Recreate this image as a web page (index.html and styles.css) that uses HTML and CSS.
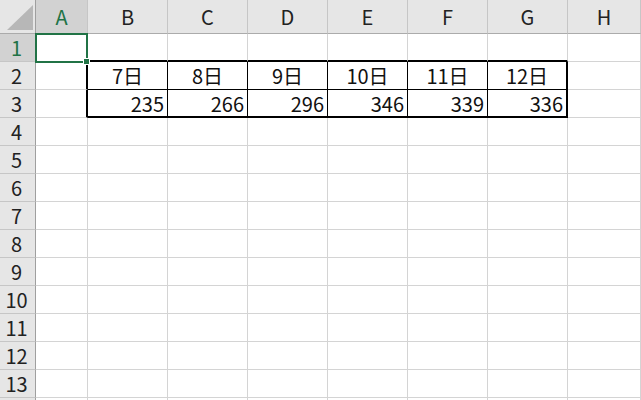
FILE: index.html
```html
<!DOCTYPE html>
<html lang="ja">
<head>
    <meta charset="UTF-8">
    <meta name="viewport" content="width=device-width, initial-scale=1.0">
    <title>Book1 - Excel</title>
    <link rel="stylesheet" href="styles.css">
</head>
<body>
    <div class="sheet">
        <!-- column headers -->
        <div class="corner">
            <svg width="35" height="33" viewBox="0 0 35 33"><polygon points="7,30 33,30 33,5" fill="#b7b7b7"/></svg>
        </div>
        <div class="col-head sel">A</div>
        <div class="col-head">B</div>
        <div class="col-head">C</div>
        <div class="col-head">D</div>
        <div class="col-head">E</div>
        <div class="col-head">F</div>
        <div class="col-head">G</div>
        <div class="col-head">H</div>

        <!-- row 1 -->
        <div class="row-head sel">1</div>
        <div class="cell active edge-r"><span class="cursor"><span class="handle"></span></span></div>
        <div class="cell above"></div>
        <div class="cell above"></div>
        <div class="cell above"></div>
        <div class="cell above"></div>
        <div class="cell above"></div>
        <div class="cell above"></div>
        <div class="cell"></div>

        <!-- row 2 -->
        <div class="row-head">2</div>
        <div class="cell edge-r"></div>
        <div class="cell tbl mid center">7日</div>
        <div class="cell tbl mid center">8日</div>
        <div class="cell tbl mid center">9日</div>
        <div class="cell tbl mid center">10日</div>
        <div class="cell tbl mid center">11日</div>
        <div class="cell tbl mid last center">12日</div>
        <div class="cell"></div>

        <!-- row 3 -->
        <div class="row-head">3</div>
        <div class="cell edge-r"></div>
        <div class="cell tbl bottom num">235</div>
        <div class="cell tbl bottom num">266</div>
        <div class="cell tbl bottom num">296</div>
        <div class="cell tbl bottom num">346</div>
        <div class="cell tbl bottom num">339</div>
        <div class="cell tbl bottom last num">336</div>
        <div class="cell"></div>

        <div class="row-head">4</div>
        <div class="cell"></div><div class="cell"></div><div class="cell"></div><div class="cell"></div><div class="cell"></div><div class="cell"></div><div class="cell"></div><div class="cell"></div>
        <div class="row-head">5</div>
        <div class="cell"></div><div class="cell"></div><div class="cell"></div><div class="cell"></div><div class="cell"></div><div class="cell"></div><div class="cell"></div><div class="cell"></div>
        <div class="row-head">6</div>
        <div class="cell"></div><div class="cell"></div><div class="cell"></div><div class="cell"></div><div class="cell"></div><div class="cell"></div><div class="cell"></div><div class="cell"></div>
        <div class="row-head">7</div>
        <div class="cell"></div><div class="cell"></div><div class="cell"></div><div class="cell"></div><div class="cell"></div><div class="cell"></div><div class="cell"></div><div class="cell"></div>
        <div class="row-head">8</div>
        <div class="cell"></div><div class="cell"></div><div class="cell"></div><div class="cell"></div><div class="cell"></div><div class="cell"></div><div class="cell"></div><div class="cell"></div>
        <div class="row-head">9</div>
        <div class="cell"></div><div class="cell"></div><div class="cell"></div><div class="cell"></div><div class="cell"></div><div class="cell"></div><div class="cell"></div><div class="cell"></div>
        <div class="row-head">10</div>
        <div class="cell"></div><div class="cell"></div><div class="cell"></div><div class="cell"></div><div class="cell"></div><div class="cell"></div><div class="cell"></div><div class="cell"></div>
        <div class="row-head">11</div>
        <div class="cell"></div><div class="cell"></div><div class="cell"></div><div class="cell"></div><div class="cell"></div><div class="cell"></div><div class="cell"></div><div class="cell"></div>
        <div class="row-head">12</div>
        <div class="cell"></div><div class="cell"></div><div class="cell"></div><div class="cell"></div><div class="cell"></div><div class="cell"></div><div class="cell"></div><div class="cell"></div>
        <div class="row-head">13</div>
        <div class="cell"></div><div class="cell"></div><div class="cell"></div><div class="cell"></div><div class="cell"></div><div class="cell"></div><div class="cell"></div><div class="cell"></div>
        <!-- next row only peeks in at the bottom edge -->
        <div class="row-head"></div>
        <div class="cell"></div><div class="cell"></div><div class="cell"></div><div class="cell"></div><div class="cell"></div><div class="cell"></div><div class="cell"></div><div class="cell"></div>
    </div>
</body>
</html>
```

FILE: styles.css
```css
* {
    box-sizing: border-box;
}

body {
    margin: 0;
    background-color: #fff;
    font-family: "Noto Sans CJK JP", "Noto Sans", sans-serif;
    font-size: 20px;
    color: #111;
    overflow: hidden;
}

.sheet {
    display: grid;
    grid-template-columns: 36px 52px repeat(6, 80px) 1fr;
    grid-template-rows: 34px repeat(14, 28px);
    width: 641px;
    height: 400px;
    overflow: hidden;
}

/* headers */
.corner {
    background-color: #e6e6e6;
    border-right: 1px solid #9f9f9f;
    border-bottom: 1px solid #ababab;
}

.corner svg {
    display: block;
}

.col-head {
    display: flex;
    align-items: center;
    justify-content: center;
    background-color: #e6e6e6;
    border-right: 1px solid #c6c6c6;
    border-bottom: 1px solid #ababab;
    color: #222;
}

.row-head {
    display: flex;
    align-items: center;
    justify-content: center;
    padding-right: 2px;
    background-color: #e6e6e6;
    border-right: 1px solid #9f9f9f;
    border-bottom: 1px solid #c6c6c6;
    color: #222;
}

.col-head.sel,
.row-head.sel {
    background-color: #d2d2d2;
    color: #217346;
}

/* cells */
.cell {
    display: flex;
    align-items: center;
    position: relative;
    border-right: 1px solid #d4d4d4;
    border-bottom: 1px solid #d4d4d4;
    padding: 0 3px;
    white-space: nowrap;
}

.center {
    justify-content: center;
}

.num {
    justify-content: flex-end;
}

/* ruled block B2:G3 */
.cell.above {
    border-bottom: 2px solid #000;
}

.cell.edge-r {
    border-right: 2px solid #000;
}

.cell.tbl {
    border-right: 1px solid #000;
}

.cell.tbl.mid {
    border-bottom: 1px solid #000;
}

.cell.tbl.bottom {
    border-bottom: 2px solid #000;
}

.cell.tbl.last {
    border-right: 2px solid #000;
}

/* active cell A1 */
.cell.active {
    z-index: 2;
}

.cursor {
    position: absolute;
    top: -1px;
    left: -1px;
    right: -2px;
    bottom: -2px;
    border: 2px solid #217346;
}

.handle {
    position: absolute;
    right: -4px;
    bottom: -4px;
    width: 7px;
    height: 7px;
    background-color: #217346;
    border: 1px solid #fff;
}
```
